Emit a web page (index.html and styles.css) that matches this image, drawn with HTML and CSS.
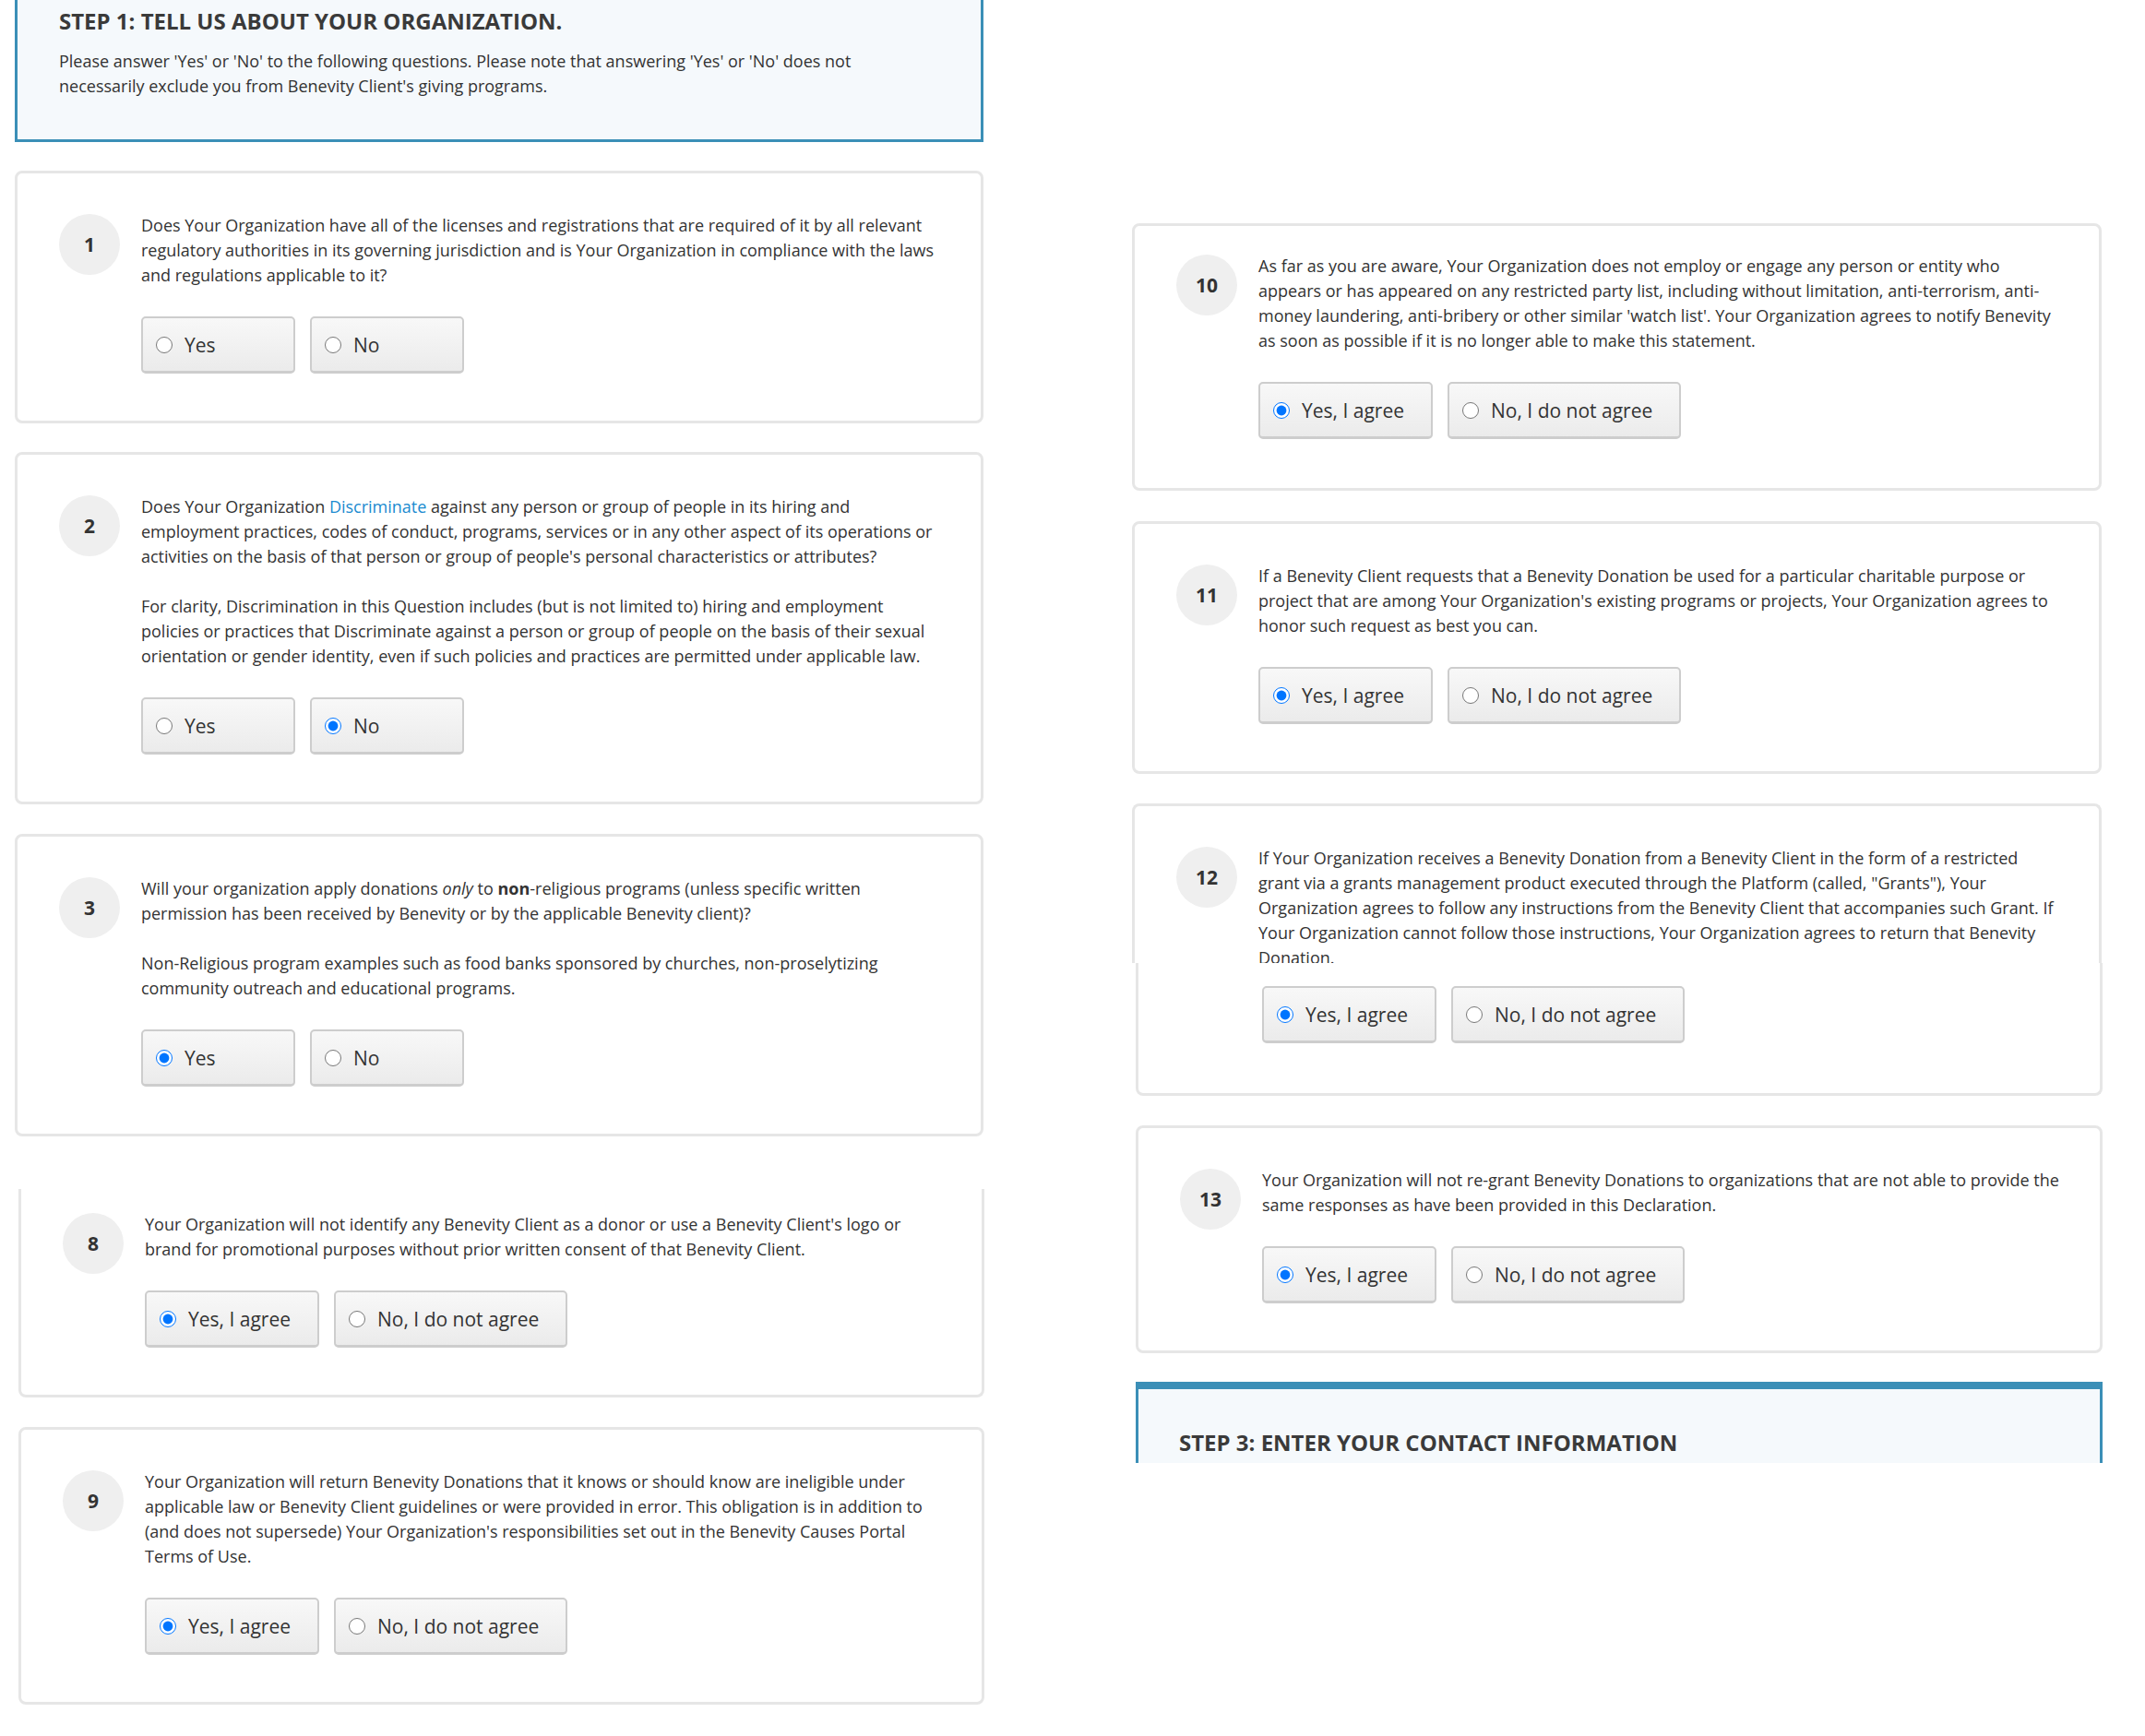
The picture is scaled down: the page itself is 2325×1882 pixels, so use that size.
FILE: index.html
```html
<!DOCTYPE html>
<html lang="en">
<head>
  <meta charset="UTF-8" />
  <meta name="viewport" content="width=device-width, initial-scale=1.0" />
  <title>Organization Declaration</title>
  <link rel="stylesheet" href="styles.css">
</head>
<body>
  <div class="page">
    <div class="col col-left">
      <section class="step step-one">
        <h2>STEP 1: TELL US ABOUT YOUR ORGANIZATION.</h2>
        <p>Please answer 'Yes' or 'No' to the following questions. Please note that answering 'Yes' or 'No' does not necessarily exclude you from Benevity Client's giving programs.</p>
      </section>

      <div class="card gap-31">
        <div class="num">1</div>
        <div class="body">
          <div class="question">
            <p>Does Your Organization have all of the licenses and registrations that are required of it by all relevant regulatory authorities in its governing jurisdiction and is Your Organization in compliance with the laws and regulations applicable to it?</p>
          </div>
          <div class="choices">
            <label class="choice short"><input type="radio" name="q1"> Yes</label>
            <label class="choice short"><input type="radio" name="q1"> No</label>
          </div>
        </div>
      </div>

      <div class="card gap-31">
        <div class="num">2</div>
        <div class="body">
          <div class="question">
            <p>Does Your Organization <a href="#">Discriminate</a> against any person or group of people in its hiring and employment practices, codes of conduct, programs, services or in any other aspect of its operations or activities on the basis of that person or group of people's personal characteristics or attributes?</p>
            <p>For clarity, Discrimination in this Question includes (but is not limited to) hiring and employment policies or practices that Discriminate against a person or group of people on the basis of their sexual orientation or gender identity, even if such policies and practices are permitted under applicable law.</p>
          </div>
          <div class="choices">
            <label class="choice short"><input type="radio" name="q2"> Yes</label>
            <label class="choice short"><input type="radio" name="q2" checked> No</label>
          </div>
        </div>
      </div>

      <div class="card gap-32">
        <div class="num">3</div>
        <div class="body">
          <div class="question">
            <p>Will your organization apply donations <em>only</em> to <strong>non</strong>-religious programs (unless specific written permission has been received by Benevity or by the applicable Benevity client)?</p>
            <p>Non-Religious program examples such as food banks sponsored by churches, non-proselytizing community outreach and educational programs.</p>
          </div>
          <div class="choices">
            <label class="choice short"><input type="radio" name="q3" checked> Yes</label>
            <label class="choice short"><input type="radio" name="q3"> No</label>
          </div>
        </div>
      </div>

      <div class="card cut-top shifted gap-57">
        <div class="num">8</div>
        <div class="body">
          <div class="question">
            <p>Your Organization will not identify any Benevity Client as a donor or use a Benevity Client's logo or brand for promotional purposes without prior written consent of that Benevity Client.</p>
          </div>
          <div class="choices">
            <label class="choice"><input type="radio" name="q8" checked> Yes, I agree</label>
            <label class="choice"><input type="radio" name="q8"> No, I do not agree</label>
          </div>
        </div>
      </div>

      <div class="card shifted gap-32">
        <div class="num">9</div>
        <div class="body">
          <div class="question">
            <p>Your Organization will return Benevity Donations that it knows or should know are ineligible under applicable law or Benevity Client guidelines or were provided in error. This obligation is in addition to (and does not supersede) Your Organization's responsibilities set out in the Benevity Causes Portal Terms of Use.</p>
          </div>
          <div class="choices">
            <label class="choice"><input type="radio" name="q9" checked> Yes, I agree</label>
            <label class="choice"><input type="radio" name="q9"> No, I do not agree</label>
          </div>
        </div>
      </div>
    </div>

    <div class="col col-right">
      <div class="card first-right">
        <div class="num">10</div>
        <div class="body">
          <div class="question">
            <p>As far as you are aware, Your Organization does not employ or engage any person or entity who appears or has appeared on any restricted party list, including without limitation, anti-terrorism, anti-money laundering, anti-bribery or other similar 'watch list'. Your Organization agrees to notify Benevity as soon as possible if it is no longer able to make this statement.</p>
          </div>
          <div class="choices">
            <label class="choice"><input type="radio" name="q10" checked> Yes, I agree</label>
            <label class="choice"><input type="radio" name="q10"> No, I do not agree</label>
          </div>
        </div>
      </div>

      <div class="card gap-33">
        <div class="num">11</div>
        <div class="body">
          <div class="question">
            <p>If a Benevity Client requests that a Benevity Donation be used for a particular charitable purpose or project that are among Your Organization's existing programs or projects, Your Organization agrees to honor such request as best you can.</p>
          </div>
          <div class="choices">
            <label class="choice"><input type="radio" name="q11" checked> Yes, I agree</label>
            <label class="choice"><input type="radio" name="q11"> No, I do not agree</label>
          </div>
        </div>
      </div>

      <div class="card split-top gap-32">
        <div class="num">12</div>
        <div class="body">
          <div class="question">
            <p>If Your Organization receives a Benevity Donation from a Benevity Client in the form of a restricted grant via a grants management product executed through the Platform (called, "Grants"), Your Organization agrees to follow any instructions from the Benevity Client that accompanies such Grant. If Your Organization cannot follow those instructions, Your Organization agrees to return that Benevity Donation.</p>
          </div>
        </div>
      </div>
      <div class="card split-bottom shifted">
        <div class="choices">
          <label class="choice"><input type="radio" name="q12" checked> Yes, I agree</label>
          <label class="choice"><input type="radio" name="q12"> No, I do not agree</label>
        </div>
      </div>

      <div class="card shifted wide gap-32">
        <div class="num">13</div>
        <div class="body">
          <div class="question">
            <p>Your Organization will not re-grant Benevity Donations to organizations that are not able to provide the same responses as have been provided in this Declaration.</p>
          </div>
          <div class="choices">
            <label class="choice"><input type="radio" name="q13" checked> Yes, I agree</label>
            <label class="choice"><input type="radio" name="q13"> No, I do not agree</label>
          </div>
        </div>
      </div>

      <section class="step step-three shifted">
        <h2>STEP 3: ENTER YOUR CONTACT INFORMATION</h2>
      </section>
    </div>
  </div>
</body>
</html>
```

FILE: styles.css
```css
body {
  margin: 0;
  background: #fff;
  font-family: "Open Sans", "Liberation Sans", sans-serif;
  color: #333;
}
.page {
  display: flex;
  gap: 161px;
  padding-left: 16px;
}
.col {
  display: flex;
  flex-direction: column;
}
.col-left {
  width: 1050px;
}
.col-right {
  width: 1051px;
  padding-top: 242px;
}

/* step header boxes */
.step {
  background: #f5f9fc;
  border: 3px solid #3b8fb7;
  box-sizing: border-box;
}
.step h2 {
  margin: 0;
  font-size: 24px;
  font-weight: 700;
  line-height: 33px;
  color: #3a3a3a;
}
.step-one {
  border-top: none;
  padding: 6px 46px 44px 45px;
}
.step-one p {
  margin: 14px 0 0;
  font-size: 18px;
  line-height: 27px;
}
.step-three {
  margin-top: 31px;
  height: 88px;
  overflow: hidden;
  border-top-width: 8px;
  border-bottom: none;
  padding: 41px 46px 0 44px;
}

/* question cards */
.card {
  display: flex;
  align-items: flex-start;
  border: 3px solid #e6e6e6;
  border-radius: 8px;
  padding: 43px 45px 51px 45px;
  background: #fff;
}
.gap-31 { margin-top: 31px; }
.gap-32 { margin-top: 32px; }
.gap-33 { margin-top: 33px; }
.gap-57 { margin-top: 57px; }
.shifted {
  margin-left: 4px;
  margin-right: -1px;
}
.wide {
  padding-right: 34px;
}
.first-right {
  padding-top: 30px;
  padding-bottom: 53px;
}
.cut-top {
  border-top: none;
  border-top-left-radius: 0;
  border-top-right-radius: 0;
  padding-top: 25px;
  padding-bottom: 51px;
}
.split-top {
  height: 173px;
  box-sizing: border-box;
  overflow: hidden;
  border-bottom: none;
  border-bottom-left-radius: 0;
  border-bottom-right-radius: 0;
}
.split-bottom {
  border-top: none;
  border-top-left-radius: 0;
  border-top-right-radius: 0;
  padding: 25px 45px 54px 134px;
}
.num {
  flex: none;
  width: 66px;
  height: 66px;
  margin-top: 1px;
  border-radius: 50%;
  background: #efefef;
  display: flex;
  align-items: center;
  justify-content: center;
  font-size: 21px;
  font-weight: 700;
  color: #333;
}
.body {
  flex: 1;
  margin-left: 23px;
}
.question p {
  margin: 0;
  font-size: 18px;
  line-height: 27px;
}
.question p + p {
  margin-top: 27px;
}
.question a {
  color: #1b8bd0;
  text-decoration: none;
}
.choices {
  display: flex;
  gap: 16px;
  margin-top: 31px;
}
.split-bottom .choices {
  margin-top: 0;
}
.choice {
  display: flex;
  align-items: center;
  gap: 13px;
  height: 62px;
  box-sizing: border-box;
  padding: 0 29px 0 14px;
  border: 2px solid #cdcdcd;
  border-bottom-width: 3px;
  border-radius: 5px;
  background: linear-gradient(#f8f8f8, #ebebeb);
  font-size: 21px;
  color: #333;
  cursor: pointer;
}
.choice.short {
  width: 167px;
}
.choice input {
  width: 18px;
  height: 18px;
  margin: 0;
}
```
